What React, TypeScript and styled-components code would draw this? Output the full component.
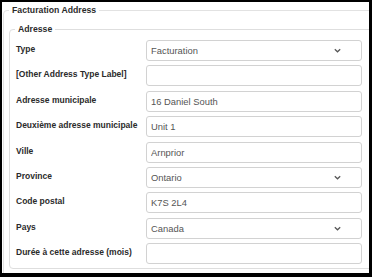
import React from 'react';
import styled, { createGlobalStyle } from 'styled-components';

const Global = createGlobalStyle`
  html, body { margin: 0; padding: 0; background: #000; width: 372px; height: 277px; overflow: hidden; }
  * { box-sizing: border-box; }
`;

const Frame = styled.div`
  margin: 2px 0 0 2px;
  width: 367px;
  height: 271px;
  background: #fff;
  overflow: hidden;
  padding-left: 1px;
  font-family: "Liberation Sans", Arial, sans-serif;
  color: #333;
`;

const Set = styled.fieldset<{ $inner?: boolean }>`
  margin: ${p => (p.$inner ? '0' : '1px 0 0 0')};
  min-width: 0;
  width: ${p => (p.$inner ? '380px' : '400px')};
  border: 1px solid ${p => (p.$inner ? '#dedede' : '#e2e2e2')};
  border-radius: 4px;
  padding: ${p => (p.$inner ? '4px 0 3.8px 5px' : '5px 0 20px 5px')};
`;

const Legend = styled.legend`
  padding: 0 3px;
  font-size: 8.7px;
  line-height: 14px;
  font-weight: bold;
  color: #2b2b2b;
`;

const Grid = styled.div`
  display: grid;
  grid-template-columns: 131px 216px;
  row-gap: 4.4px;
`;

const Label = styled.label`
  font-size: 8.5px;
  font-weight: bold;
  line-height: 18.5px;
  padding-left: 1px;
  color: #2b2b2b;
  white-space: nowrap;
`;

const Input = styled.input`
  height: 21px;
  width: 216px;
  margin: 0;
  border: 1px solid #d2d2d2;
  border-radius: 3px;
  padding: 0 4px;
  font-family: "Liberation Sans", Arial, sans-serif;
  font-size: 9.4px;
  color: #555;
  background: #fff;
  outline: none;
`;

const Select = styled.div`
  height: 21px;
  width: 216px;
  border: 1px solid #d2d2d2;
  border-radius: 3px;
  padding: 0 20px 0 4px;
  display: flex;
  align-items: center;
  justify-content: space-between;
  font-size: 9.4px;
  color: #555;
  background: #fff;
`;

const Chevron = () => (
  <svg width="7" height="5" viewBox="0 0 7 5">
    <path d="M0.8 1.2 L3.5 3.8 L6.2 1.2" fill="none" stroke="#555" strokeWidth="1.2" />
  </svg>
);

type Row = { label: string; value: string; select?: boolean };

const rows: Row[] = [
  { label: 'Type', value: 'Facturation', select: true },
  { label: '[Other Address Type Label]', value: '' },
  { label: 'Adresse municipale', value: '16 Daniel South' },
  { label: 'Deuxième adresse municipale', value: 'Unit 1' },
  { label: 'Ville', value: 'Arnprior' },
  { label: 'Province', value: 'Ontario', select: true },
  { label: 'Code postal', value: 'K7S 2L4' },
  { label: 'Pays', value: 'Canada', select: true },
  { label: 'Durée à cette adresse (mois)', value: '' },
];

export default function App() {
  return (
    <>
      <Global />
      <Frame>
        <Set>
          <Legend>Facturation Address</Legend>
          <Set $inner>
            <Legend>Adresse</Legend>
            <Grid>
              {rows.map(r => (
                <React.Fragment key={r.label}>
                  <Label>{r.label}</Label>
                  {r.select ? (
                    <Select>
                      <span>{r.value}</span>
                      <Chevron />
                    </Select>
                  ) : (
                    <Input defaultValue={r.value} readOnly />
                  )}
                </React.Fragment>
              ))}
            </Grid>
          </Set>
        </Set>
      </Frame>
    </>
  );
}
